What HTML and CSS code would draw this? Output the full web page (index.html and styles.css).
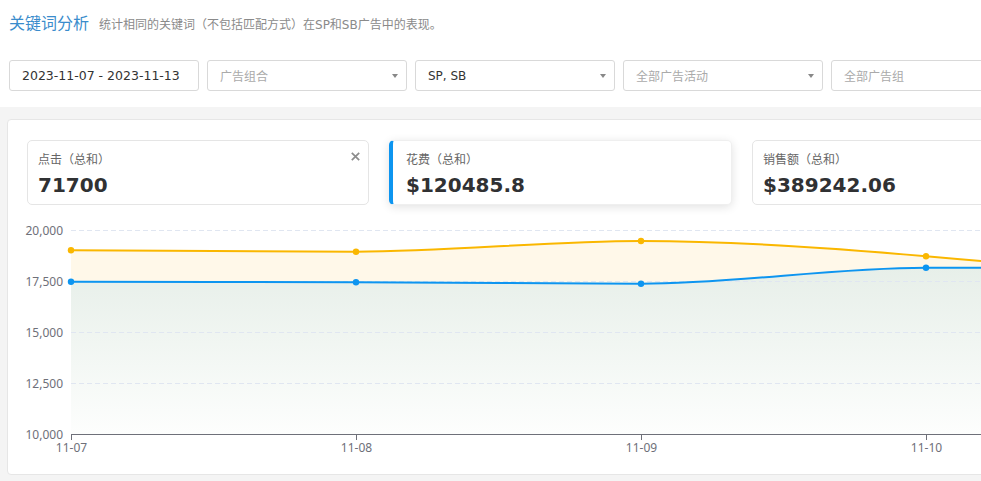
FILE: index.html
```html
<!DOCTYPE html>
<html lang="zh-CN">
<head>
<meta charset="utf-8">
<title>关键词分析</title>
<link rel="stylesheet" href="styles.css">
</head>
<body>
<div class="page">
  <div class="header">
    <h1 class="title">关键词分析</h1>
    <span class="subtitle">统计相同的关键词（不包括匹配方式）在SP和SB广告中的表现。</span>
  </div>

  <div class="filters">
    <div class="field date">2023-11-07 - 2023-11-13</div>
    <div class="field placeholder"><span>广告组合</span><i class="caret"></i></div>
    <div class="field"><span>SP, SB</span><i class="caret"></i></div>
    <div class="field placeholder"><span>全部广告活动</span><i class="caret"></i></div>
    <div class="field placeholder"><span>全部广告组</span><i class="caret"></i></div>
  </div>

  <div class="content">
    <div class="panel">
      <div class="metrics">
        <div class="metric">
          <div class="label">点击（总和）</div>
          <div class="value">71700</div>
          <svg class="close" width="9" height="9" viewBox="0 0 9 9"><path d="M0.8 0.8L8.2 8.2M8.2 0.8L0.8 8.2" stroke="#8c8c8c" stroke-width="1.7" fill="none"/></svg>
        </div>
        <div class="metric active">
          <div class="label">花费（总和）</div>
          <div class="value">$120485.8</div>
        </div>
        <div class="metric">
          <div class="label">销售额（总和）</div>
          <div class="value">$389242.06</div>
        </div>
      </div>

      <svg class="chart" width="1290" height="255" viewBox="0 0 1290 255">
        <defs>
          <linearGradient id="gBlue" x1="0" y1="0" x2="0" y2="1">
            <stop offset="0" stop-color="#e7efe9"/>
            <stop offset="1" stop-color="#fdfefd"/>
          </linearGradient>
        </defs>
        <g transform="translate(-8 -210)">
          <path d="M71,250.3 C166,250.3 261,251.7 356,251.7 C451,251.7 546,241 641,241 C736,241 831,247.8 926,256.3 C1021,264.9 1116,272 1211,272 L1211,434.5 L71,434.5 Z" fill="#fff8e9"/>
          <path d="M71,281.7 C166,281.7 261,282.3 356,282.3 C451,282.3 546,283.7 641,283.7 C736,283.7 831,267.7 926,267.7 C1021,267.7 1116,267.7 1211,267.7 L1211,434.5 L71,434.5 Z" fill="url(#gBlue)"/>
          <path d="M71 230.5H1300M71 281.5H1300M71 332.5H1300M71 383.5H1300" stroke="#e0e6f1" stroke-width="1" stroke-dasharray="5 3" fill="none"/>
          <path d="M71 434.5H1300M71.5 434.5V440M356.5 434.5V440M641.5 434.5V440M926.5 434.5V440" stroke="#6e7079" stroke-width="1" fill="none"/>
          <path d="M71,250.3 C166,250.3 261,251.7 356,251.7 C451,251.7 546,241 641,241 C736,241 831,247.8 926,256.3 C1021,264.9 1116,272 1211,272" stroke="#fab700" stroke-width="2" fill="none"/>
          <path d="M71,281.7 C166,281.7 261,282.3 356,282.3 C451,282.3 546,283.7 641,283.7 C736,283.7 831,267.7 926,267.7 C1021,267.7 1116,267.7 1211,267.7" stroke="#0d95f0" stroke-width="2" fill="none"/>
          <g fill="#fab700">
            <circle cx="71" cy="250.3" r="3.2"/>
            <circle cx="356" cy="251.7" r="3.2"/>
            <circle cx="641" cy="241" r="3.2"/>
            <circle cx="926" cy="256.3" r="3.2"/>
          </g>
          <g fill="#0d95f0">
            <circle cx="71" cy="281.7" r="3.2"/>
            <circle cx="356" cy="282.3" r="3.2"/>
            <circle cx="641" cy="283.7" r="3.2"/>
            <circle cx="926" cy="267.7" r="3.2"/>
          </g>
          <g class="axis-text" text-anchor="end">
            <text x="63" y="234.5">20,000</text>
            <text x="63" y="285.5">17,500</text>
            <text x="63" y="336.5">15,000</text>
            <text x="63" y="387.5">12,500</text>
            <text x="63" y="438.5">10,000</text>
          </g>
          <g class="axis-text" text-anchor="middle">
            <text x="71.5" y="451.5">11-07</text>
            <text x="356.5" y="451.5">11-08</text>
            <text x="641.5" y="451.5">11-09</text>
            <text x="926.5" y="451.5">11-10</text>
          </g>
        </g>
      </svg>
    </div>
  </div>
</div>
</body>
</html>
```

FILE: styles.css
```css
html, body {
  margin: 0;
  padding: 0;
}

body {
  font-family: "DejaVu Sans", "Noto Sans CJK SC", sans-serif;
  color: #333;
  background: #fff;
  overflow: hidden;
}

.page {
  width: 1400px;
  min-height: 481px;
  background: #f4f4f4;
}

.header,
.filters {
  background: #fff;
}

.header {
  display: flex;
  align-items: baseline;
  gap: 10px;
  padding: 12px 9px 0;
  height: 24px;
}

.title {
  margin: 0;
  font-size: 16px;
  font-weight: normal;
  line-height: 24px;
  color: #3a8ccc;
}

.subtitle {
  font-size: 12px;
  color: #8a8a8a;
}

.filters {
  display: flex;
  gap: 8px;
  padding: 24px 9px 16px;
}

.field {
  box-sizing: border-box;
  flex-shrink: 0;
  width: 200px;
  height: 31px;
  border: 1px solid #d9d9d9;
  border-radius: 3px;
  display: flex;
  align-items: center;
  justify-content: space-between;
  padding: 0 8px 0 12px;
  font-size: 12px;
  color: #333;
}

.field.date {
  width: 190px;
  font-size: 12.5px;
}

.field.placeholder {
  color: #aaa;
}

.caret {
  width: 0;
  height: 0;
  border-left: 3.5px solid transparent;
  border-right: 3.5px solid transparent;
  border-top: 4px solid #888;
}

.content {
  padding: 12px 0 10px 7px;
}

.panel {
  width: 1300px;
  background: #fff;
  border: 1px solid #e6e6e6;
  border-radius: 4px;
  padding: 20px 0 9px 0;
}

.metrics {
  display: flex;
  gap: 20px;
  padding-left: 19px;
}

.metric {
  position: relative;
  box-sizing: border-box;
  flex-shrink: 0;
  width: 342px;
  height: 65px;
  border: 1px solid #e5e5e5;
  border-radius: 5px;
  padding: 10px 10px 0;
  background: #fff;
}

.metric.active {
  width: 343px;
  border-color: #efefef;
  border-left: 4px solid #0d95f0;
  padding-left: 13px;
  box-shadow: 0 2px 10px rgba(0, 0, 0, 0.12);
}

.label {
  font-size: 12px;
  line-height: 18px;
  color: #666;
}

.value {
  margin-top: 2px;
  font-size: 20px;
  font-weight: bold;
  line-height: 28px;
  color: #303133;
}

.close {
  position: absolute;
  top: 11px;
  right: 8px;
}

.chart {
  display: block;
  margin-top: 5px;
}

.axis-text {
  font-family: "Noto Sans", sans-serif;
  font-size: 12px;
  fill: #6e7079;
}
```
